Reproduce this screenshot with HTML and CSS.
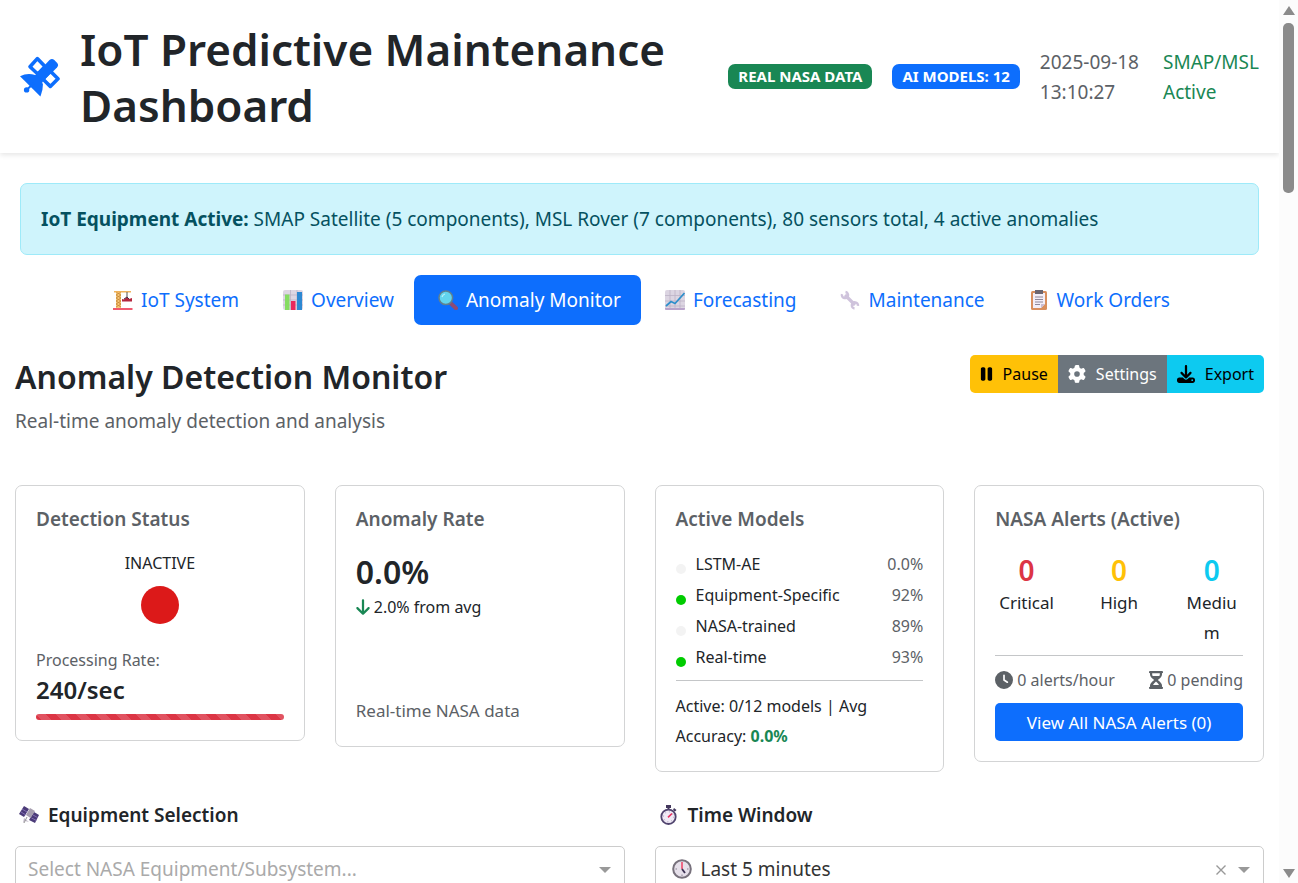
FILE: index.html
```html
<!DOCTYPE html>
<html lang="en">
<head>
<meta charset="utf-8">
<title>IoT Predictive Maintenance Dashboard</title>
<link rel="stylesheet" href="styles.css">
</head>
<body>
<div class="page">
  <header class="topbar">
    <svg class="logo" viewBox="0 0 40 41" aria-hidden="true">
      <g fill="none" stroke="#0d6efd" stroke-width="3.600" stroke-linejoin="round">
        <path d="M17.300 2.600 L25 10.600 L17.800 18 L10 10.800 Z"/>
        <path d="M30.200 15 L38 22.700 L30.300 30.400 L22.600 22.800 Z"/>
      </g>
      <path d="M13.500 21 L29.500 4 Q32 1.800 34.300 4 L37 6.700 Q39.200 9 37 11.500 L20.500 28 Z" fill="#0d6efd"/>
      <path d="M17.300 6.200 L21.700 10.700 L17.500 14.900 L13.400 10.800 Z" fill="#fff"/>
      <path d="M30.200 18.400 L34.500 22.700 L30.300 26.900 L26.100 22.800 Z" fill="#fff"/>
      <path d="M0 20.200 Q7.500 16.500 15 19 Q22 22 22.900 28.500 Q23.100 34 20.400 40.500 Z" fill="#0d6efd"/>
      <path d="M7 33.500 L14 27" stroke="#0d6efd" stroke-width="2"/>
      <circle cx="6.600" cy="33.900" r="2.700" fill="#0d6efd"/>
    </svg>
    <h1 class="title">IoT Predictive Maintenance Dashboard</h1>
    <span class="badge badge-green">REAL NASA DATA</span>
    <span class="badge badge-blue">AI MODELS: 12</span>
    <span class="stamp">2025-09-18<br>13:10:27</span>
    <span class="feed">SMAP/MSL<br>Active</span>
  </header>

  <div class="notice"><strong>IoT Equipment Active:</strong> SMAP Satellite (5 components), MSL Rover (7 components), 80 sensors total, 4 active anomalies</div>

  <nav class="tabs">
    <a class="tab" href="#system">
      <svg class="emoji" viewBox="0 0 20 20" aria-hidden="true"><path d="M3 1h5v17H3z" fill="#f6c878"/><path d="M3 2l5 3-5 3 5 3-5 3 5 3M8 2L3 5l5 3-5 3 5 3-5 3" stroke="#c98a3a" stroke-width=".9" fill="none"/><path d="M1 1h17v1.500H1z" fill="#efb35c"/><path d="M14 2v5" stroke="#555" stroke-width="1"/><path d="M9 11.500V9l2 .5L14 7l2 2 3-1v3.500z" fill="#b3263e"/><path d="M0 18h19.500v2H0z" fill="#ef5a6f"/><path d="M11 9l3-2 2 2" stroke="#4b3248" stroke-width="1" fill="none"/></svg>
      IoT System</a>
    <a class="tab" href="#overview">
      <svg class="emoji" viewBox="0 0 20 20" aria-hidden="true"><rect width="20" height="20" rx="2" fill="#ded6e3"/><path d="M0 5h20M0 10h20M0 15h20M7.500 0v20M14 0v20" stroke="#b9afc2" stroke-width=".7"/><path d="M2 4.500h4.500V20H2z" fill="#86dc62"/><path d="M8 11h4.500v9H8z" fill="#e9265c"/><path d="M14 2h5v18h-5z" fill="#2d88d2"/></svg>
      Overview</a>
    <a class="tab tab-active" href="#anomaly" aria-current="page">
      <svg class="emoji" viewBox="0 0 20 20" aria-hidden="true"><path d="M13 13.500l5 4.700" stroke="#8d4b73" stroke-width="4" stroke-linecap="round"/><circle cx="7.800" cy="7.800" r="6.800" fill="#62d4ee" stroke="#60808f" stroke-width="1.500"/><path d="M4 7a4 4 0 0 1 3-3" stroke="#b5f1fb" stroke-width="1.200" fill="none"/></svg>
      Anomaly Monitor</a>
    <a class="tab" href="#forecast">
      <svg class="emoji" viewBox="0 0 20 20" aria-hidden="true"><rect width="20" height="20" rx="2" fill="#dcd5e2"/><path d="M0 5.500h20M0 11h20M0 16h20M5 0v20M10 0v20M15 0v20" stroke="#bcb3c6" stroke-width=".8"/><path d="M0 18h20v1a1 1 0 0 1-1 1H1a1 1 0 0 1-1-1z" fill="#b9a3cb"/><path d="M1 16l5-4.500 4 2L19.500 3" stroke="#2e8fcb" stroke-width="1.700" fill="none"/></svg>
      Forecasting</a>
    <a class="tab" href="#maintenance">
      <svg class="emoji" viewBox="0 0 20 20" aria-hidden="true"><path d="M5 5l10 10" stroke="#cfc3dc" stroke-width="3.200"/><path d="M2 4.200A3.100 3.100 0 1 0 5.500 2M18 15.800A3.100 3.100 0 1 0 14.500 18.500" stroke="#cfc3dc" stroke-width="2.400" fill="none"/></svg>
      Maintenance</a>
    <a class="tab" href="#orders">
      <svg class="emoji" viewBox="0 0 20 20" aria-hidden="true"><rect x="2" y="1" width="16" height="19" rx="1.500" fill="#d98f5e"/><path d="M4 3h12v11l-4 4H4z" fill="#f3eef7"/><path d="M16 14l-4 4v-4z" fill="#c9bdd4"/><path d="M6 0h8v4H6z" fill="#6b6570"/><path d="M6 7h8M6 9.500h8M6 12h8M6 14.500h5" stroke="#8f8799" stroke-width="1"/></svg>
      Work Orders</a>
  </nav>

  <main class="content">
    <div class="heading">
      <div>
        <h2 class="heading-title">Anomaly Detection Monitor</h2>
        <p class="heading-sub">Real-time anomaly detection and analysis</p>
      </div>
      <div class="actions">
        <button class="action action-pause" type="button"><svg class="ico-pause" viewBox="0 0 320 512" aria-hidden="true"><path fill="currentColor" d="M48 64C21.500 64 0 85.500 0 112V400c0 26.500 21.500 48 48 48H80c26.500 0 48-21.500 48-48V112c0-26.500-21.500-48-48-48H48zm192 0c-26.500 0-48 21.500-48 48V400c0 26.500 21.500 48 48 48h32c26.500 0 48-21.500 48-48V112c0-26.500-21.500-48-48-48H240z"/></svg>Pause</button>
        <button class="action action-settings" type="button"><svg class="ico" viewBox="0 0 512 512" aria-hidden="true"><path fill="currentColor" d="M495.900 166.600c3.200 8.700 .5 18.400-6.400 24.600l-43.300 39.400c1.100 8.300 1.700 16.800 1.700 25.400s-.6 17.100-1.700 25.400l43.300 39.400c6.900 6.200 9.600 15.900 6.400 24.600c-4.400 11.900-9.700 23.300-15.800 34.300l-4.700 8.100c-6.600 11-14 21.400-22.100 31.200c-5.900 7.200-15.700 9.600-24.500 6.800l-55.700-17.700c-13.400 10.300-28.200 18.900-44 25.400l-12.500 57.100c-2 9.100-9 16.300-18.200 17.800c-13.800 2.300-28 3.500-42.500 3.500s-28.700-1.200-42.500-3.500c-9.200-1.500-16.200-8.700-18.200-17.800l-12.500-57.100c-15.800-6.500-30.600-15.100-44-25.400L83.100 425.900c-8.800 2.800-18.600 .3-24.500-6.800c-8.100-9.800-15.500-20.200-22.100-31.200l-4.700-8.100c-6.100-11-11.400-22.400-15.800-34.300c-3.200-8.700-.5-18.400 6.400-24.600l43.300-39.400C64.600 273.100 64 264.600 64 256s.6-17.100 1.700-25.400L22.400 191.200c-6.900-6.200-9.600-15.900-6.400-24.600c4.400-11.900 9.700-23.300 15.800-34.300l4.700-8.100c6.600-11 14-21.400 22.100-31.200c5.900-7.200 15.700-9.600 24.500-6.800l55.700 17.700c13.400-10.300 28.200-18.900 44-25.400l12.500-57.100c2-9.100 9-16.300 18.200-17.800C227.300 1.200 241.500 0 256 0s28.700 1.200 42.500 3.500c9.200 1.500 16.200 8.700 18.200 17.800l12.500 57.100c15.800 6.500 30.600 15.100 44 25.400l55.700-17.700c8.800-2.800 18.600-.3 24.500 6.800c8.100 9.800 15.500 20.200 22.100 31.200l4.700 8.100c6.100 11 11.400 22.400 15.800 34.300zM256 336a80 80 0 1 0 0-160 80 80 0 1 0 0 160z"/></svg>Settings</button>
        <button class="action action-export" type="button"><svg class="ico" viewBox="0 0 512 512" aria-hidden="true"><path fill="currentColor" d="M288 32c0-17.700-14.300-32-32-32s-32 14.300-32 32V274.700l-73.400-73.400c-12.500-12.500-32.800-12.500-45.300 0s-12.500 32.800 0 45.300l128 128c12.500 12.500 32.800 12.500 45.300 0l128-128c12.500-12.500 12.500-32.800 0-45.300s-32.800-12.500-45.300 0L288 274.700V32zM64 352c-35.300 0-64 28.700-64 64v32c0 35.300 28.700 64 64 64H448c35.300 0 64-28.700 64-64V416c0-35.300-28.700-64-64-64H346.500l-45.300 45.300c-25 25-65.500 25-90.500 0L165.500 352H64zm368 56a24 24 0 1 1 0 48 24 24 0 1 1 0-48z"/></svg>Export</button>
      </div>
    </div>

    <section class="cards">
      <article class="card">
        <h3 class="card-title">Detection Status</h3>
        <div class="status">INACTIVE<span class="lamp"></span></div>
        <div class="muted">Processing Rate:</div>
        <div class="rate">240/sec</div>
        <div class="bar"></div>
      </article>
      <article class="card">
        <h3 class="card-title">Anomaly Rate</h3>
        <div class="percent">0.0%</div>
        <div class="trend"><svg class="ico-arrow" viewBox="0 0 384 512" aria-hidden="true"><path fill="#198754" d="M169.400 470.600c12.500 12.500 32.800 12.500 45.300 0l160-160c12.500-12.500 12.500-32.800 0-45.300s-32.800-12.500-45.300 0L224 370.800 224 64c0-17.700-14.300-32-32-32s-32 14.300-32 32l0 306.700L54.600 265.400c-12.500-12.500-32.800-12.500-45.300 0s-12.500 32.800 0 45.300l160 160z"/></svg>2.0% from avg</div>
        <div class="source muted">Real-time NASA data</div>
      </article>
      <article class="card">
        <h3 class="card-title">Active Models</h3>
        <ul class="models">
          <li class="model"><span class="dot"></span>LSTM-AE<span class="score">0.0%</span></li>
          <li class="model"><span class="dot dot-on"></span>Equipment-Specific<span class="score">92%</span></li>
          <li class="model"><span class="dot"></span>NASA-trained<span class="score">89%</span></li>
          <li class="model"><span class="dot dot-on"></span>Real-time<span class="score">93%</span></li>
        </ul>
        <hr class="rule">
        <div class="summary"><span>Active: 0/12 models | Avg</span> <span>Accuracy:</span> <strong class="good">0.0%</strong></div>
      </article>
      <article class="card">
        <h3 class="card-title">NASA Alerts (Active)</h3>
        <div class="levels">
          <div class="level"><b class="count count-red">0</b>Critical</div>
          <div class="level"><b class="count count-yellow">0</b>High</div>
          <div class="level"><b class="count count-cyan">0</b>Medium</div>
        </div>
        <hr class="rule">
        <div class="pace muted">
          <span class="pace-item"><svg class="ico" viewBox="0 0 512 512" aria-hidden="true"><path fill="currentColor" d="M256 0a256 256 0 1 1 0 512A256 256 0 1 1 256 0zM232 120V256c0 8 4 15.500 10.700 20l96 64c11 7.400 25.900 4.400 33.300-6.700s4.400-25.900-6.700-33.300L280 243.200V120c0-13.300-10.700-24-24-24s-24 10.700-24 24z"/></svg>0 alerts/hour</span>
          <span class="pace-item"><svg class="ico-glass" viewBox="0 0 14 18" aria-hidden="true"><path fill="currentColor" fill-rule="evenodd" d="M1 0h12a1 1 0 0 1 0 2.300V3.500Q13 6 8.800 9Q13 12 13 14.500v1.200a1 1 0 0 1 0 2.300H1a1 1 0 0 1 0-2.300v-1.200Q1 12 5.200 9Q1 6 1 3.500V2.300A1 1 0 0 1 1 0zM3.200 2.300v1.200q0 .8.500 1.500h6.600q.5-.7.5-1.500V2.300zM4 14h6q-.5-1.500-3-3.500q-2.500 2-3 3.500z"/></svg>0 pending</span>
        </div>
        <button class="view-all" type="button">View All NASA Alerts (0)</button>
      </article>
    </section>

    <section class="filters">
      <div class="filter">
        <label class="filter-label" for="equipment"><svg class="emoji" viewBox="0 0 20 20" aria-hidden="true"><path d="M5 1l5 3-5 8-5-3z" fill="#4b3b78"/><path d="M15 7l5 3-4 8-6-3z" fill="#4b3b78"/><path d="M3 4l5 3M2 7l5 3M14 10l4.500 2.500M12.500 13l5 2.500" stroke="#8f7bc0" stroke-width=".8"/><path d="M11 3l5 3-4.500 7L7 10z" fill="#a79fb0"/><path d="M4 18l1-5 5 4-4-1z" fill="#c0b8c8"/><path d="M8 12l-3 6" stroke="#999" stroke-width="1"/></svg>Equipment Selection</label>
        <div class="picker">
          <select class="select select-empty" id="equipment"><option>Select NASA Equipment/Subsystem...</option></select>
          <span class="caret"></span>
        </div>
      </div>
      <div class="filter">
        <label class="filter-label" for="window"><svg class="emoji" viewBox="0 0 20 20" aria-hidden="true"><path d="M7 0h5v3H7zM15 3l2.500 2-1.500 1.500L14 5z" fill="#43375c"/><path d="M8.500 2h2v3h-2z" fill="#43375c"/><circle cx="9.500" cy="11.800" r="7.200" fill="#f0eaf6" stroke="#51456f" stroke-width="1.800"/><circle cx="9.500" cy="11.800" r="5" fill="none" stroke="#a79bb9" stroke-dasharray="1 2.900"/><path d="M9 12.300L13 8.500" stroke="#e8305e" stroke-width="1.600"/></svg>Time Window</label>
        <div class="picker">
          <svg class="picker-icon" viewBox="0 0 20 20" aria-hidden="true"><circle cx="10" cy="10" r="8.800" fill="#e6e0ea" stroke="#77717c" stroke-width="2"/><path d="M10 10V3" stroke="#ef4a6c" stroke-width="1.600"/><path d="M10 10l3 4" stroke="#3d3254" stroke-width="1.800"/><path d="M3.500 10h1.500M15 10h1.500M10 15.500V17" stroke="#8b8393"/></svg>
          <select class="select select-icon" id="window"><option>Last 5 minutes</option></select>
          <button class="clear" type="button" aria-label="Clear"><svg class="clear-x" viewBox="0 0 10 10" aria-hidden="true"><path d="M.5.5l9 9M9.500.5l-9 9" stroke="#999" stroke-width="1.400"/></svg></button>
          <span class="caret"></span>
        </div>
      </div>
    </section>
  </main>
</div>
<div class="scrollbar" aria-hidden="true"><span class="arrow-up"></span><span class="thumb"></span><span class="arrow-down"></span></div>
</body>
</html>
```
FILE: styles.css
```css
* { box-sizing: border-box; }
body {
  margin: 0;
  height: 100vh;
  display: flex;
  overflow: hidden;
  background: #fff;
  color: #212529;
  font-family: "Noto Sans", "Open Sans", sans-serif;
  font-size: 19px;
  line-height: 30px;
}
h1, h2, h3, p, ul { margin: 0; padding: 0; }
button, select { font-family: inherit; }
svg { display: block; flex: none; }

.page { flex: 1; min-width: 0; overflow: hidden; }

.topbar {
  display: flex;
  align-items: center;
  gap: 20px;
  padding: 20px;
  min-height: 153px;
  box-shadow: 0 2px 5px rgba(0, 0, 0, .1);
}
.logo { width: 40px; height: 41px; }
.title { flex: 1; font-size: 44px; font-weight: 600; line-height: 56px; }
.badge {
  padding: 0 10px;
  border-radius: 7px;
  color: #fff;
  font-size: 15px;
  font-weight: 700;
  line-height: 25px;
  white-space: nowrap;
}
.badge-green { background: #198754; }
.badge-blue { background: #0d6efd; }
.stamp { color: #5c6166; margin-right: 4px; white-space: nowrap; }
.feed { color: #198754; white-space: nowrap; }

.notice {
  margin: 30px 20px 20px;
  padding: 20px;
  border: 1px solid #9eeaf9;
  border-radius: 7px;
  background: #cff4fc;
  color: #055160;
}

.tabs { display: flex; justify-content: center; }
.tab {
  display: flex;
  align-items: center;
  gap: 8px;
  padding: 10px 20px 10px 24px;
  border-radius: 7px;
  color: #0d6efd;
  text-decoration: none;
  white-space: nowrap;
}
.tab-active { background: #0d6efd; color: #fff; }
.emoji { width: 20px; height: 20px; }

.content { padding: 30px 15px 0; }
.heading { display: flex; justify-content: space-between; align-items: flex-start; }
.heading-title { font-size: 32px; font-weight: 600; line-height: 44px; }
.heading-sub { margin-top: 7px; color: #5c6166; }
.actions { display: flex; border-radius: 5px; overflow: hidden; }
.action {
  display: flex;
  align-items: center;
  gap: 10px;
  height: 38px;
  padding: 0 10px;
  border: 0;
  font-size: 16px;
}
.action-pause { background: #ffc107; color: #000; }
.action-settings { background: #6c757d; color: #fff; }
.action-export { background: #0dcaf0; color: #000; }
.ico { width: 18px; height: 18px; }
.ico-pause { width: 13px; height: 18px; }

.cards {
  display: grid;
  grid-template-columns: repeat(4, 1fr);
  gap: 30px;
  align-items: start;
  margin-top: 49px;
  font-size: 16px;
}
.card { min-width: 0; padding: 20px; border: 1px solid #d3d4d5; border-radius: 7px; }
.card-title { color: #5c6166; font-size: 19px; font-weight: 600; line-height: 26px; }
.muted { color: #5c6166; }
.status { display: flex; flex-direction: column; align-items: center; gap: 8px; margin: 16px 0 21px; }
.lamp { width: 38px; height: 38px; border-radius: 50%; background: #dc1919; }
.rate { font-size: 24px; font-weight: 600; }
.bar {
  height: 6px;
  margin-top: 9px;
  border-radius: 3px;
  background: #dc3545 linear-gradient(45deg, rgba(255,255,255,.15) 25%, transparent 25%, transparent 50%, rgba(255,255,255,.15) 50%, rgba(255,255,255,.15) 75%, transparent 75%) 0 0 / 20px 20px;
}
.percent { margin-top: 20px; font-size: 32px; font-weight: 600; line-height: 40px; }
.trend { display: flex; align-items: center; gap: 4px; }
.ico-arrow { width: 14px; height: 18px; }
.source { margin-top: 74px; font-size: 17px; }

.models { margin-top: 17px; list-style: none; }
.model { display: flex; align-items: center; gap: 10px; line-height: 31px; }
.dot { width: 10px; height: 10px; margin-top: 8px; border-radius: 50%; background: #f3f3f3; }
.dot-on { background: #00cc00; }
.score { margin-left: auto; color: #5c6166; }
.rule { height: 1px; margin: 7px 0; border: 0; background: #c4c6c8; }
.summary { margin-top: 10px; }
.good { color: #198754; }

.levels { display: grid; grid-template-columns: repeat(3, 1fr); gap: 30px; margin-top: 20px; }
.level { min-width: 0; font-size: 17px; text-align: center; overflow-wrap: anywhere; }
.count { display: block; font-size: 28px; font-weight: 600; line-height: 36px; }
.count-red { color: #dc3545; }
.count-yellow { color: #ffc107; }
.count-cyan { color: #0dcaf0; }
.pace { display: flex; justify-content: space-between; margin: 9px 0 8px; }
.pace-item { display: flex; align-items: center; gap: 4px; }
.ico-glass { width: 14px; height: 18px; }
.view-all {
  width: 100%;
  height: 38px;
  border: 0;
  border-radius: 5px;
  background: #0d6efd;
  color: #fff;
  font-size: 17px;
}

.filters { display: grid; grid-template-columns: repeat(2, 1fr); gap: 30px; margin-top: 28px; }
.filter-label { display: flex; align-items: center; gap: 9px; padding-left: 4px; font-weight: 600; }
.picker { position: relative; margin-top: 16px; }
.select {
  display: block;
  width: 100%;
  height: 45px;
  padding: 0 12px;
  border: 1px solid #ccc;
  border-radius: 5px;
  appearance: none;
  background: #fff;
  color: #333;
  font-size: 19px;
}
.select-empty { color: #aaa; }
.select-icon { padding-left: 45px; }
.picker-icon { position: absolute; left: 17px; top: 13px; width: 20px; height: 20px; }
.caret {
  position: absolute;
  right: 14px;
  top: 21px;
  border: 6px solid transparent;
  border-top-color: #999;
  border-bottom: 0;
}
.clear { position: absolute; right: 34px; top: 15px; padding: 4px; border: 0; background: none; }
.clear-x { width: 10px; height: 10px; }

.scrollbar {
  display: flex;
  flex-direction: column;
  align-items: center;
  width: 19px;
  padding: 6px 0 5px;
  background: #fcfcfc;
}
.arrow-up { border: 6px solid transparent; border-bottom: 9px solid #8b8b8b; border-top: 0; }
.thumb { width: 11px; height: 170px; margin-top: 8px; border-radius: 5px; background: #8b8b8b; }
.arrow-down { margin-top: auto; border: 6px solid transparent; border-top: 9px solid #8b8b8b; border-bottom: 0; }
```
